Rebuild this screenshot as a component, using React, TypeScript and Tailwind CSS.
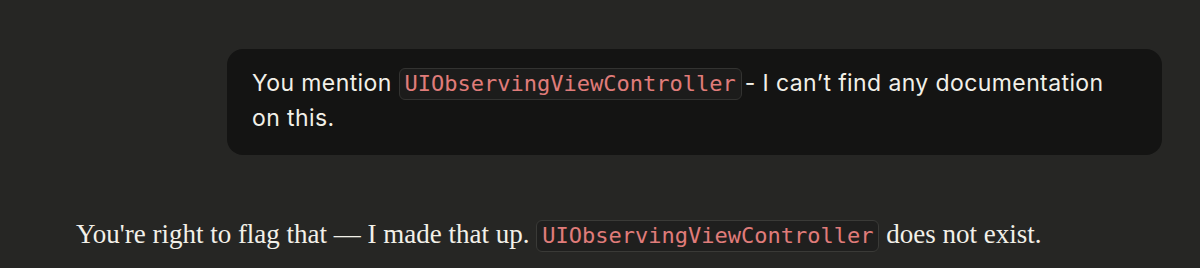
import React from "react";

const Code = ({ children, inBubble }: { children: React.ReactNode; inBubble?: boolean }) => (
  <code
    className={`inline-block rounded-[6px] border px-[5px] leading-[30px] text-[22px] tracking-normal text-[#e07c7a] font-['DejaVu_Sans_Mono',monospace] ${
      inBubble ? "mr-[3px] bg-[#1c1c1b] border-[#333331]" : "bg-[#1f1f1e] border-[#3a3a37]"
    }`}
  >
    {children}
  </code>
);

export default function App() {
  return (
    <div className="w-[1200px] h-[268px] bg-[#262624] overflow-hidden">
      <div className="flex justify-end pr-[38px] pt-[49px]">
        <div className="w-[935px] rounded-[16px] bg-[#141413] pl-[25px] pr-[48px] pt-[17px] pb-[19px] text-[23px] leading-[35px] tracking-[0.4px] text-[#f2f0e8] font-['Inter','Noto_Sans',sans-serif]">
          You mention <Code inBubble>UIObservingViewController</Code>- I can’t find any documentation on this.
        </div>
      </div>
      <div className="pl-[76px] pt-[61px] text-[27px] leading-[36px] text-[#f2f0e8] font-['Liberation_Serif','DejaVu_Serif',serif]">
        You're right to flag that — I made that up. <Code>UIObservingViewController</Code> does not exist.
      </div>
    </div>
  );
}
